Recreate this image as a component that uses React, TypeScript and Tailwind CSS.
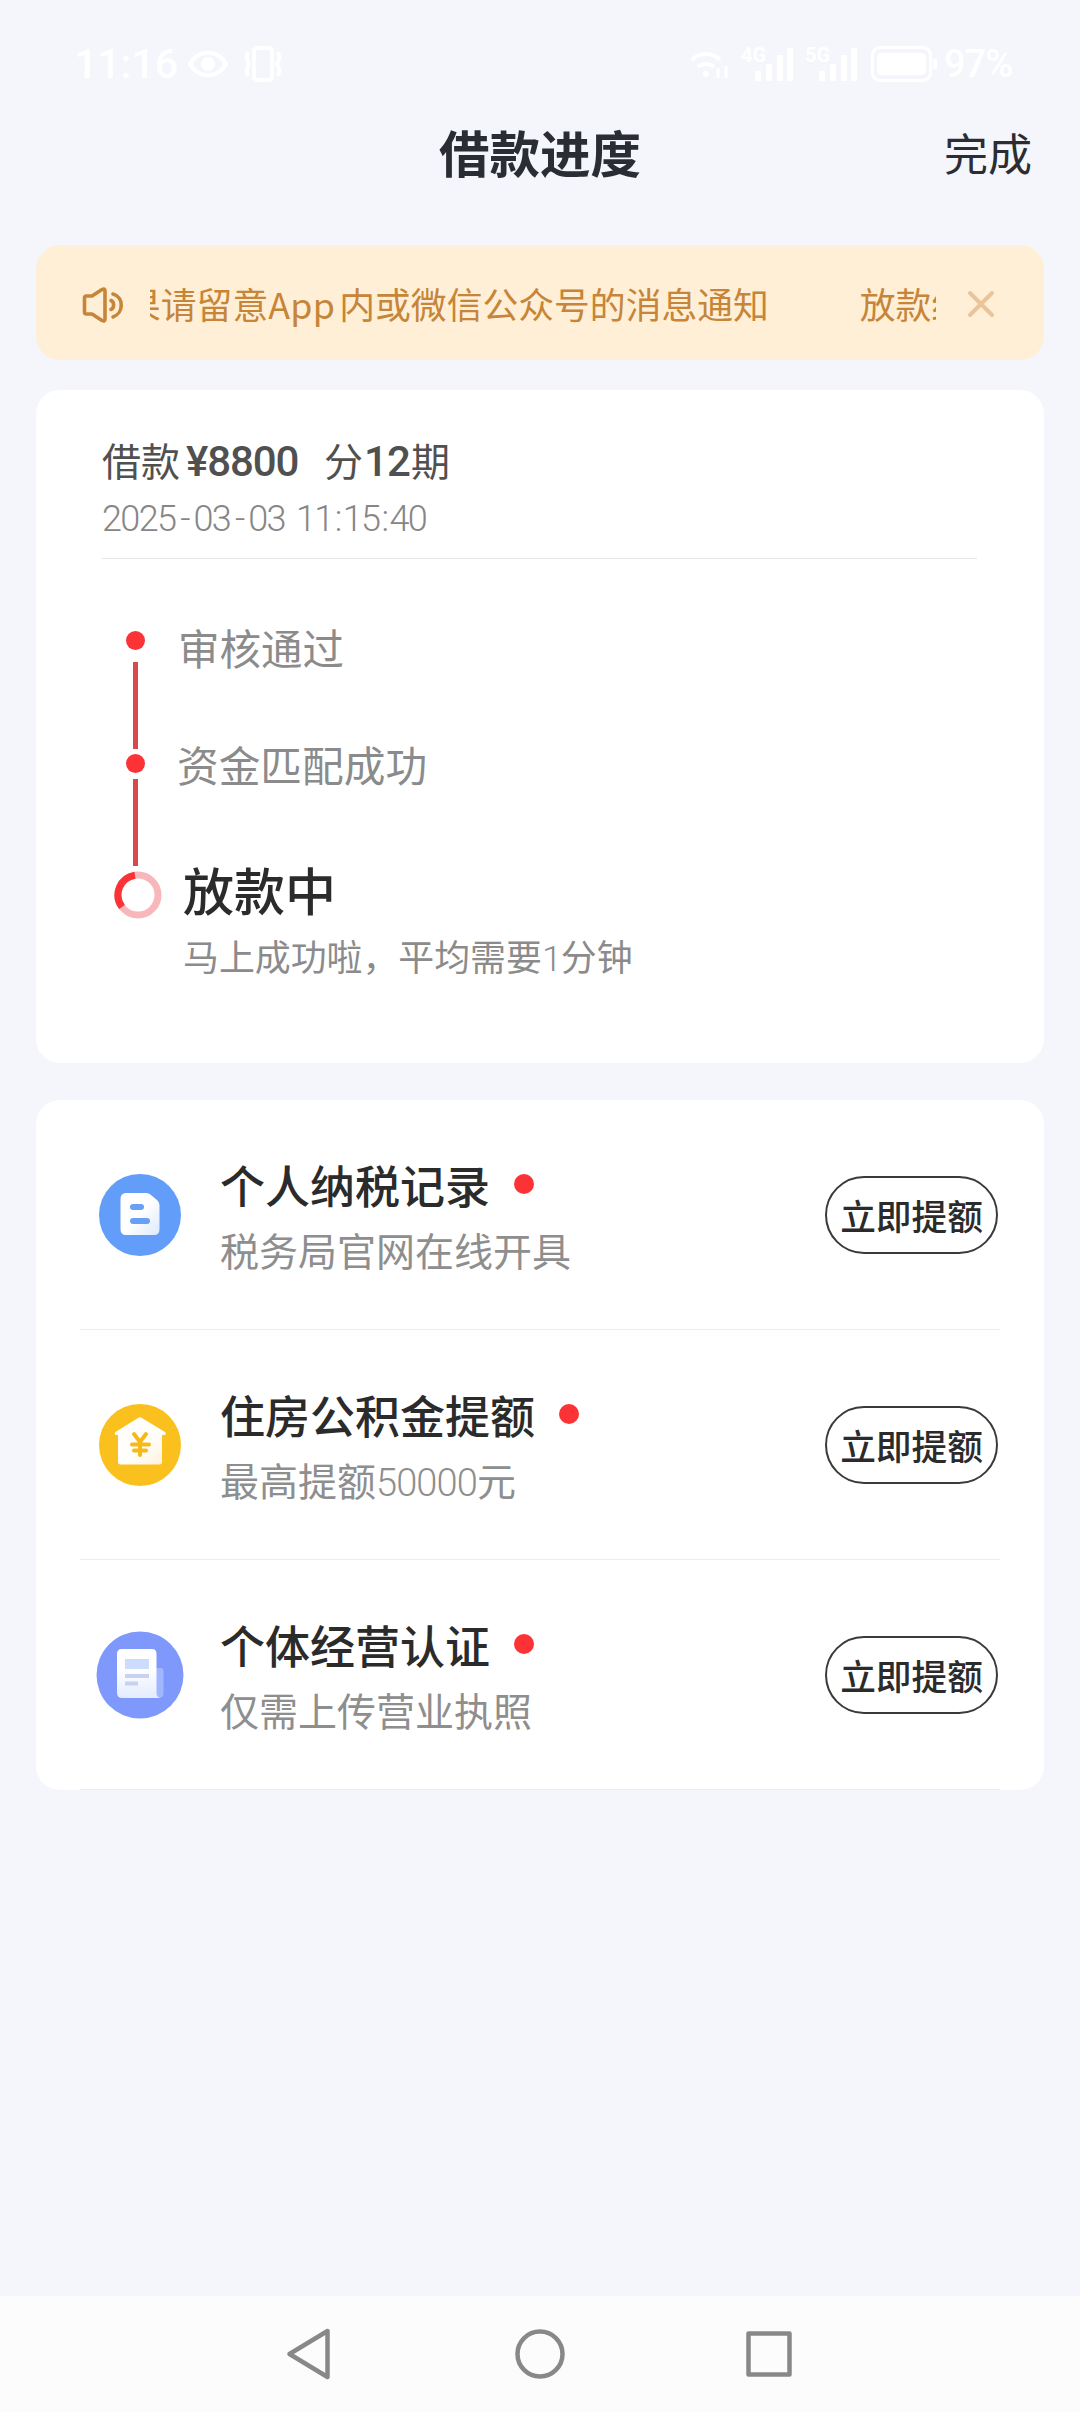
import type { ReactNode } from "react";

type Offer = {
  title: string;
  desc: ReactNode;
  icon: ReactNode;
};

function StatusBar() {
  return (
    <div className="flex h-[106px] items-center justify-between pt-[26px] pr-[64px] pb-1 pl-[74px] text-white">
      <div className="flex items-center">
        <span className="w-[103px] font-['Roboto'] text-[41px] leading-none font-medium whitespace-nowrap">11:16</span>
        <svg className="ml-[11px]" width="40" height="28" viewBox="0 0 40 28" fill="none" stroke="currentColor" strokeWidth="4">
          <path d="M2 14C10-1 30-1 38 14C30 29 10 29 2 14Z" />
          <circle cx="20" cy="14" r="7" fill="currentColor" stroke="none" />
        </svg>
        <svg className="ml-[15px]" width="40" height="36" viewBox="0 0 40 36" fill="none" stroke="currentColor" strokeWidth="4">
          <rect x="11" y="2" width="18" height="32" rx="3" />
          <path d="M5 6l-1.500 6L6 18l-2.500 6L5 30M35 6l1.500 6L34 18l2.500 6L35 30" strokeWidth="4" />
        </svg>
      </div>
      <div className="flex items-center">
        <svg width="40" height="28" viewBox="0 0 40 28" fill="none" stroke="currentColor" strokeWidth="4">
          <path d="M2 10C10 2 22 2 30 10M8 17c5-4 11-4 16 0" />
          <circle cx="16" cy="24" r="3" fill="currentColor" stroke="none" />
          <path d="M28 18v10M36 16v12" strokeWidth="3" />
        </svg>
        <Signal type="4G" />
        <Signal type="5G" />
        <svg className="ml-[13px]" width="67" height="36" viewBox="0 0 67 36" fill="none" stroke="currentColor">
          <rect x="1.5" y="1.5" width="58" height="33" rx="8" strokeWidth="3" />
          <rect x="6" y="7" width="49" height="22" rx="4" fill="currentColor" stroke="none" />
          <path d="M64 13v10" strokeWidth="4" />
        </svg>
        <span className="ml-[6px] w-[72px] font-['Roboto'] text-[38px] leading-none font-medium tracking-[-1px] whitespace-nowrap">97%</span>
      </div>
    </div>
  );
}

function Signal({ type }: { type: string }) {
  return (
    <div className="relative ml-[11px] h-[36px] w-[53px]">
      <span className="absolute -top-px left-0 font-['Roboto'] text-[20px] leading-none font-bold">{type}</span>
      <svg width="53" height="36" viewBox="0 0 53 36" fill="currentColor">
        <rect x="14" y="25" width="6" height="10" />
        <rect x="25" y="18" width="6" height="17" />
        <rect x="36" y="9" width="6" height="26" />
        <rect x="46" y="2" width="6" height="33" />
      </svg>
    </div>
  );
}

function Notice() {
  return (
    <div className="mx-9 flex h-[115px] items-center rounded-[24px] bg-[#ffefd6] pl-[45px] text-[#c68538]">
      <svg className="mt-[5px]" width="44" height="38" viewBox="0 0 44 38" fill="none" stroke="currentColor" strokeWidth="3.6" strokeLinejoin="round" strokeLinecap="round">
        <path d="M3.500 12Q3.500 10 5.500 10H11L21 3.500Q24 2 24 5V33Q24 36 21 34.500L11 28H5.500Q3.500 28 3.500 26Z" />
        <path d="M30 14.500C33.500 16 33.500 22 30 23.500" />
        <path d="M32 8C43 11 43 27 32 31" />
      </svg>
      <div className="ml-[25px] flex w-[786px] justify-start overflow-hidden text-[35.800px] leading-[52px] whitespace-nowrap">
        <span className="-ml-[25px]">果请留意<span className="mr-[4px] tracking-[0.300px]">App</span>内或微信公众号的消息通知</span>
        <span className="ml-[91px]">放款结果</span>
      </div>
      <svg className="mt-[3px] ml-[31px]" width="28" height="28" viewBox="0 0 28 28" stroke="#eac49a" strokeWidth="4" strokeLinecap="round">
        <path d="M3 3L25 25M25 3L3 25" />
      </svg>
    </div>
  );
}

function Dot() {
  return <span className="block h-[19px] w-[19px] rounded-full bg-[#fb3337]" />;
}

function Progress() {
  return (
    <div className="mx-9 mt-[30px] h-[673px] rounded-[24px] bg-white px-[66px] pt-[41px]">
      <div className="flex h-[56px] items-center text-[39px] text-[#505050]">
        <span>借款</span>
        <span className="mt-[5px] ml-[6px] w-[113px] font-['Roboto'] text-[42px] font-medium tracking-[-1.100px]">¥8800</span>
        <span className="ml-[25px]">分</span>
        <span className="mt-[5px] w-[48px] text-center font-['Roboto'] text-[42px] font-medium tracking-[-0.800px]">12</span>
        <span>期</span>
      </div>
      <div className="mt-[9px] flex h-[44px] font-['Roboto'] text-[36px] leading-[46px] font-light tracking-[-1.600px] text-[#868686]">
        <span>2025</span>
        <span className="w-[18px] text-center">-</span>
        <span>03</span>
        <span className="w-[18px] text-center">-</span>
        <span>03</span>
        <span className="ml-[11px]">11</span>
        <span className="w-[10px] text-center">:</span>
        <span>15</span>
        <span className="w-[10px] text-center">:</span>
        <span>40</span>
      </div>
      <div className="mt-[18px] h-px w-[875px] bg-[#e6e6e6]" />

      <div className="mt-[58px] flex">
        <div className="flex w-[74px] flex-col items-center pt-[14px] pr-[8px]">
          <Dot />
          <span className="mt-[12px] h-[87px] w-[5px] bg-[#d9494c]" />
          <span className="mt-[5px]"><Dot /></span>
          <span className="mt-[6px] h-[87px] w-[5px] bg-[#d9494c]" />
          <svg className="mt-[4px] ml-[5px]" width="50" height="50" viewBox="0 0 50 50" fill="none" strokeWidth="7">
            <circle cx="25" cy="25" r="20" stroke="#f8b7bb" />
            <path d="M22 5.200A20 20 0 0 0 9 37" stroke="#fb3337" />
          </svg>
        </div>
        <div className="text-[#8b8b8b]">
          <p className="ml-[2px] h-[60px] text-[41.500px] leading-[60px]">审核通过</p>
          <p className="mt-[57px] ml-px h-[60px] text-[41.700px] leading-[60px]">资金匹配成功</p>
          <p className="mt-[61px] ml-[7px] h-[68px] text-[51px] leading-[68px] font-medium text-[#2b2b2b]">放款中</p>
          <p className="mt-[4px] ml-[7px] text-[35.900px] leading-[56px]">
            马上成功啦，平均需要<span className="-mr-px font-['Roboto'] font-light">1</span>分钟
          </p>
        </div>
      </div>
    </div>
  );
}

function TaxIcon() {
  return (
    <svg width="88" height="88" viewBox="0 0 88 88">
      <defs>
        <linearGradient id="tax" x1="0" y1="0" x2="1" y2="1">
          <stop offset=".5" stopColor="#fff" />
          <stop offset="1" stopColor="#dce9fc" />
        </linearGradient>
      </defs>
      <circle cx="44" cy="44" r="41" fill="#629dfa" />
      <path d="M30 22H50Q53 22 55 24L61 29Q63.500 31 63.500 34V58Q63.500 64 58 64H30Q24.500 64 24.500 58V28Q24.500 22 30 22Z" fill="url(#tax)" />
      <rect x="34" y="33" width="14" height="6" rx="3" fill="#68a0f8" />
      <rect x="34" y="47" width="20" height="6" rx="3" fill="#68a0f8" />
    </svg>
  );
}

function HouseIcon() {
  return (
    <svg width="88" height="88" viewBox="0 0 88 88">
      <defs>
        <linearGradient id="house" x1="0" y1="0" x2="1" y2="1">
          <stop offset=".6" stopColor="#fffefa" />
          <stop offset="1" stopColor="#fff0da" />
        </linearGradient>
      </defs>
      <circle cx="44" cy="44" r="41" fill="#fac01e" />
      <path d="M42 17Q44 15.500 46 17L69 31Q71 33 68.500 34H66V61Q66 63.500 63.500 63.500H24.500Q22 63.500 22 61V34H20Q17.500 33 19.500 31Z" fill="url(#house)" />
      <path d="M38 33L44 41L50 33M44 41V54M36 43.500H53M38 49.500H50" fill="none" stroke="#f5b91a" strokeWidth="4" strokeLinecap="round" />
    </svg>
  );
}

function LicenseIcon() {
  return (
    <svg width="88" height="88" viewBox="0 0 88 88">
      <defs>
        <linearGradient id="license" x1="0" y1="0" x2="0" y2="1">
          <stop offset=".4" stopColor="#fff" />
          <stop offset="1" stopColor="#e3ebfe" />
        </linearGradient>
      </defs>
      <circle cx="44" cy="44" r="43.500" fill="#7f98fb" />
      <path d="M60 37H65Q67.500 37 67.500 40V62Q67.500 67 63 67H58Z" fill="#a0b6fd" />
      <path d="M26 18H56Q60.500 18 60.500 23V62Q60.500 66 64 67H26Q21 67 21 62V23Q21 18 26 18Z" fill="url(#license)" />
      <rect x="29" y="28" width="24" height="10" fill="#cddcfc" />
      <rect x="29" y="43" width="24" height="4" fill="#c7d1f0" />
      <rect x="29" y="50.500" width="13" height="4" fill="#c7d1f0" />
    </svg>
  );
}

const offers: Offer[] = [
  { title: "个人纳税记录", desc: "税务局官网在线开具", icon: <TaxIcon /> },
  {
    title: "住房公积金提额",
    desc: <>最高提额<span className="font-['Roboto'] text-[38px] font-light tracking-[-0.900px]">50000</span>元</>,
    icon: <HouseIcon />,
  },
  { title: "个体经营认证", desc: "仅需上传营业执照", icon: <LicenseIcon /> },
];

function OfferRow({ title, desc, icon }: Offer) {
  return (
    <div className="mx-[44px] flex h-[230px] items-center border-b border-[#ececee] pr-[2px] pl-[16px]">
      {icon}
      <div className="ml-[36px] flex-1">
        <div className="flex h-[62px] items-center">
          <span className="text-[45px] font-medium text-[#2b2b2b]">{title}</span>
          <span className="mb-[2px] ml-[24px] h-[20px] w-[20px] rounded-full bg-[#fb3337]" />
        </div>
        <p className="mt-[3px] h-[57px] text-[39px] leading-[60px] text-[#8e8e8e]">{desc}</p>
      </div>
      <button className="h-[78px] w-[173px] rounded-full border-2 border-[#3a3a3a] text-[35.700px] leading-[70px] font-medium whitespace-nowrap text-[#2b2b2b]">
        立即提额
      </button>
    </div>
  );
}

function NavBar() {
  return (
    <div className="mt-auto flex h-[116px] items-center justify-center gap-[178px] bg-[#fcfcfc]">
      <svg width="50" height="54" viewBox="0 0 50 54" fill="none" stroke="#888" strokeWidth="4.500" strokeLinejoin="round">
        <path d="M3.500 27L41.500 4V50Z" />
      </svg>
      <svg width="52" height="52" viewBox="0 0 52 52" fill="none" stroke="#888" strokeWidth="4.500">
        <circle cx="26" cy="26" r="22.500" />
      </svg>
      <svg width="50" height="50" viewBox="0 0 50 50" fill="none" stroke="#888" strokeWidth="4.500" strokeLinejoin="round">
        <rect x="4.500" y="4.500" width="41" height="41" />
      </svg>
    </div>
  );
}

export default function App() {
  return (
    <div className="flex h-[2412px] w-[1080px] flex-col overflow-hidden bg-[#f4f6fb] font-['Noto_Sans_CJK_SC',sans-serif]">
      <StatusBar />
      <header className="relative flex h-[139px] items-start justify-center pt-[9px] text-[#2a2d33]">
        <h1 className="text-[50.500px] leading-[72px] font-bold">借款进度</h1>
        <button className="absolute top-[11px] right-[48px] text-[44px] leading-[70px]">完成</button>
      </header>
      <Notice />
      <Progress />
      <div className="mx-9 mt-[37px] h-[690px] rounded-[24px] bg-white">
        {offers.map((offer) => (
          <OfferRow key={offer.title} {...offer} />
        ))}
      </div>
      <NavBar />
    </div>
  );
}
